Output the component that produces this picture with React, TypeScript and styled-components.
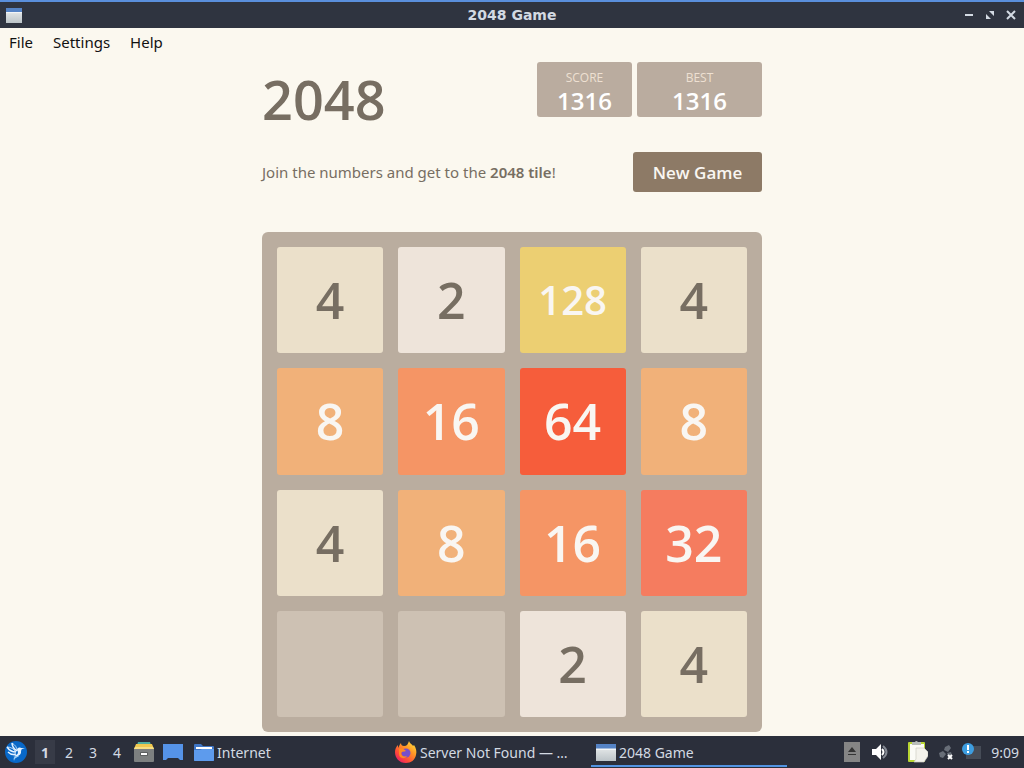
import React from "react";
import styled, { createGlobalStyle } from "styled-components";

const uiFont = `"Noto Sans", "Open Sans", sans-serif`;
const gameFont = `"Open Sans", "Noto Sans", sans-serif`;

const GlobalStyle = createGlobalStyle`
  *, *::before, *::after { box-sizing: border-box; }
  body { margin: 0; background: #fbf8ef; }
  button { font: inherit; border: 0; background: none; padding: 0; color: inherit; cursor: pointer; }
  h1, p { margin: 0; }
`;

const Desktop = styled.div`
  min-height: 100vh;
  display: flex;
  flex-direction: column;
  font-family: ${uiFont};
`;

const TitleBar = styled.header`
  height: 28px;
  border-top: 2px solid #5a8fdc;
  background: #2f3440;
  color: #d3dae3;
  display: grid;
  grid-template-columns: 1fr auto 1fr;
  align-items: center;
  padding: 0 6px;
`;

const WindowTitle = styled.span`
  font: bold 14px/26px "DejaVu Sans", sans-serif;
`;

const WindowButtons = styled.div`
  justify-self: end;
  display: flex;
  gap: 7px;
`;

const WindowButton = styled.button`
  width: 14px;
  height: 14px;
  svg { display: block; }
`;

const MenuBar = styled.nav`
  display: flex;
  gap: 20px;
  height: 28px;
  padding: 0 9px;
  align-items: center;
  font-size: 15px;
  line-height: 20px;
  color: #111;
`;

const Game = styled.main`
  flex: 1;
  width: 100%;
  max-width: 500px;
  margin: 0 auto;
  padding: 6px 0 4px;
  font-family: ${gameFont};
  color: #776e62;
`;

const Heading = styled.div`
  display: flex;
  justify-content: space-between;
  align-items: flex-start;
  height: 90px;
`;

const Logo = styled.h1`
  font-size: 54px;
  font-weight: 650;
  line-height: 74px;
`;

const Scores = styled.div`
  display: flex;
  gap: 5px;
`;

const ScoreBox = styled.div<{ $wide?: boolean }>`
  width: ${(p) => (p.$wide ? 125 : 95)}px;
  height: 55px;
  padding-top: 7px;
  border-radius: 3px;
  background: #baac9f;
  text-align: center;
`;

const ScoreLabel = styled.div`
  font-size: 12px;
  line-height: 18px;
  color: #eee0d2;
`;

const ScoreValue = styled.div`
  font-size: 24px;
  font-weight: 650;
  line-height: 28px;
  color: #fff;
`;

const Intro = styled.div`
  display: flex;
  justify-content: space-between;
  align-items: center;
  height: 40px;
  margin-bottom: 40px;
  p { font: 15px/20px ${uiFont}; }
  strong { font-weight: 600; }
`;

const NewGame = styled.button`
  width: 129px;
  height: 40px;
  border-radius: 3px;
  background: #8d7a66;
  color: #f9f6f2;
  font-size: 17px;
  font-weight: 600;
`;

const Board = styled.section`
  display: grid;
  grid-template-columns: repeat(4, 1fr);
  gap: 15px;
  padding: 15px;
  border-radius: 6px;
  background: #baad9f;
`;

const tileColors: Record<number, string> = {
  0: "#cdc1b3",
  2: "#eee4da",
  4: "#ebe0ca",
  8: "#f1b179",
  16: "#f59565",
  32: "#f57c5f",
  64: "#f65d3b",
  128: "#eccf72",
};

const Tile = styled.div<{ $value: number }>`
  aspect-ratio: 1;
  display: flex;
  align-items: center;
  justify-content: center;
  border-radius: 3px;
  background: ${(p) => tileColors[p.$value]};
  color: ${(p) => (p.$value > 4 ? "#f9f6f2" : "#776e62")};
  font-size: ${(p) => (p.$value > 99 ? 40 : 50)}px;
  font-weight: 650;
  line-height: 1;
`;

const Taskbar = styled.footer`
  height: 32px;
  display: flex;
  align-items: center;
  background: #2b2f3b;
  color: #d3dae3;
  padding: 0 5px 0 4px;
  font-size: 14px;
`;

const Launcher = styled.button`
  width: 24px;
  height: 24px;
  margin-right: 5px;
  svg { display: block; margin: auto; }
`;

const Workspaces = styled.div`
  display: flex;
  margin-right: 3px;
`;

const Workspace = styled.button<{ $active?: boolean }>`
  width: 24px;
  height: 24px;
  border-left: 2px solid transparent;
  border-right: 2px solid transparent;
  background: ${(p) => (p.$active ? "#373b47" : "transparent")} padding-box;
  font-weight: ${(p) => (p.$active ? 700 : 400)};
`;

const Folder = styled.button`
  display: flex;
  align-items: center;
  gap: 3px;
  width: 196px;
  margin-left: 4px;
`;

const Task = styled.button<{ $active?: boolean }>`
  display: flex;
  align-items: center;
  gap: 3px;
  width: ${(p) => (p.$active ? 196 : 201)}px;
  height: 30px;
  padding: 2px 5px 0;
  border-bottom: 2px solid ${(p) => (p.$active ? "#5294e2" : "transparent")};
  white-space: nowrap;
`;

const Tray = styled.div`
  margin-left: auto;
  display: flex;
  align-items: center;
`;

const TrayButton = styled.button<{ $gap: number }>`
  margin-right: ${(p) => p.$gap}px;
  svg { display: block; }
`;

const WindowIcon = ({ size, height }: { size: number; height: number }) => (
  <svg width={size} height={height} viewBox="0 0 20 18" preserveAspectRatio="none" aria-hidden="true">
    <defs>
      <linearGradient id="pane" x2="0" y2="1">
        <stop stopColor="#f0f2f2" />
        <stop offset="1" stopColor="#bcc4c8" />
      </linearGradient>
    </defs>
    <rect width="20" height="18" fill="url(#pane)" />
    <rect width="20" height="5" fill="#5583c5" />
    <path d="M0 5.5h20" stroke="#fff" />
  </svg>
);

const BirdIcon = () => (
  <svg width="22" height="22" viewBox="0 0 22 22" aria-hidden="true">
    <circle cx="11" cy="11" r="11" fill="#0868c8" />
    <path d="M7 2c0 4 2 6 5 8M2 6c2 3 5 5 9 5M3 11c2 2 5 3 8 2" fill="none" stroke="#e4f2ff" strokeWidth="1.5" />
    <path d="M7 2c3 2 5 4 5 8M2 6c4 0 7 2 9 5" fill="none" stroke="#e4f2ff" strokeWidth=".8" />
    <path d="M20 7l-4 0c-2-1-4 0-4 2 2 3 1 5-4 6 3 1 7 0 8-3 0-2 0-3 1-4z" fill="#e4f2ff" />
    <path d="M14 15c-2 2-4 1-5 5-1-3 0-4 2-5" fill="#9fd0f5" />
  </svg>
);

const DrawerIcon = () => (
  <svg width="20" height="22" viewBox="0 0 20 22" aria-hidden="true">
    <path d="M4 1h12l1 3H3z" fill="#4fae9f" />
    <path d="M2 3h16l2 5H0z" fill="#f1c94f" />
    <path d="M1 6h18l1 2H0z" fill="#f7df83" />
    <path d="M0 8h20v12q0 1-1 1H1q-1 0-1-1z" fill="#7d8080" />
    <rect x="6" y="11" width="8" height="4" rx="1" fill="#5d6060" />
    <rect x="7" y="12" width="6" height="2" fill="#fff" />
  </svg>
);

const ScreenIcon = () => (
  <svg width="20" height="18" viewBox="0 0 20 18" aria-hidden="true">
    <path d="M0 1h20v16h-3l-2-2H5l-2 2H0z" fill="#5593e8" />
  </svg>
);

const FolderIcon = () => (
  <svg width="20" height="19" viewBox="0 0 20 19" aria-hidden="true">
    <path d="M0 2q0-1 1-1h6l2 2h10q1 0 1 1v13q0 1-1 1H1q-1 0-1-1z" fill="#3f76c6" />
    <path d="M2 4h16v2H2z" fill="#fff" />
    <path d="M0 7h6l2-1h12v11q0 1-1 1H1q-1 0-1-1z" fill="#5d9bed" />
  </svg>
);

const FirefoxIcon = () => (
  <svg width="22" height="22" viewBox="0 0 22 22" aria-hidden="true">
    <defs>
      <linearGradient id="fox" x1="1" y1="0" x2="0.2" y2="1">
        <stop stopColor="#fff047" />
        <stop offset=".4" stopColor="#ff9a25" />
        <stop offset=".75" stopColor="#ff4b38" />
        <stop offset="1" stopColor="#e7196b" />
      </linearGradient>
    </defs>
    <path d="M14 0c1 3 3 3 4 5l1-1c2 3 3 6 2 10-1 5-5 8-10 8C4 22 0 17 0 11c0-3 1-5 3-7v3c1-1 1-3 3-5 0 2 1 3 3 3 3 0 4-2 5-5z" fill="url(#fox)" />
    <circle cx="11" cy="12" r="4.5" fill="#7850c9" />
    <path d="M4 8c3-1 5 0 7 2-2 1-4 0-5 2 0 3 3 4 6 3-3 4-8 2-8-2z" fill="#ff8a22" />
  </svg>
);

const EjectIcon = () => (
  <svg width="16" height="20" viewBox="0 0 16 20" aria-hidden="true">
    <path d="M0 0h16v20H0z" fill="#858585" />
    <path d="M8 5l4 5H4zM4 12h8v1H4z" fill="#343434" />
  </svg>
);

const SpeakerIcon = () => (
  <svg width="17" height="16" viewBox="0 0 17 16" aria-hidden="true">
    <path d="M0 5h4l5-5v16l-5-5H0z" fill="#fff" />
    <path d="M10 5q3 3 0 6" fill="none" stroke="#fff" strokeWidth="2" />
    <path d="M11 2q7 6 0 12" fill="none" stroke="#858a94" strokeWidth="2" />
  </svg>
);

const ClipboardIcon = () => (
  <svg width="20" height="22" viewBox="0 0 20 22" aria-hidden="true">
    <rect y="1" width="17" height="20" rx="1" fill="#b8d532" />
    <path d="M2 3h14v16H2z" fill="#fbfbf6" />
    <path d="M4 1h3q1-2 3 0h3v3H4z" fill="#b9bdb9" />
    <path d="M8 7h8l4 4v4l-4 6H6l2-3z" fill="#f4f3ec" stroke="#cfcfc4" strokeWidth=".7" />
  </svg>
);

const NetworkIcon = () => (
  <svg width="14" height="16" viewBox="0 0 14 16" aria-hidden="true">
    <path d="M6 3l4-2 2 3-3 4-4-2zM0 9l4-2 3 3-3 4-3-1zM8 9l4-1 1 3-4 1z" fill="#686e78" />
    <path d="M9 11l4 4m0-4l-4 4" stroke="#fff" strokeWidth="2" />
  </svg>
);

const UpdateIcon = () => (
  <svg width="19" height="18" viewBox="0 0 19 18" aria-hidden="true">
    <path d="M4 3h15v13H4z" fill="#464c57" />
    <circle cx="6" cy="6" r="6" fill="#3d9de0" />
    <path d="M5 2h2v5H5zM5 8h2v2H5z" fill="#fff" />
  </svg>
);

const cells = [4, 2, 128, 4, 8, 16, 64, 8, 4, 8, 16, 32, 0, 0, 2, 4];

export default function App() {
  return (
    <Desktop>
      <GlobalStyle />
      <TitleBar>
        <WindowIcon size={16} height={15} />
        <WindowTitle>2048 Game</WindowTitle>
        <WindowButtons>
          <WindowButton aria-label="Minimize">
            <svg width="14" height="14"><path d="M3 7h8" stroke="#d3dae3" strokeWidth="2" /></svg>
          </WindowButton>
          <WindowButton aria-label="Restore">
            <svg width="14" height="14"><path d="M6 3h5v5zM3 6v5h5z" fill="#d3dae3" /></svg>
          </WindowButton>
          <WindowButton aria-label="Close">
            <svg width="14" height="14"><path d="M3 3l8 8m0-8l-8 8" stroke="#d3dae3" strokeWidth="2" /></svg>
          </WindowButton>
        </WindowButtons>
      </TitleBar>
      <MenuBar>
        <button>File</button>
        <button>Settings</button>
        <button>Help</button>
      </MenuBar>
      <Game>
        <Heading>
          <Logo>2048</Logo>
          <Scores>
            <ScoreBox><ScoreLabel>SCORE</ScoreLabel><ScoreValue>1316</ScoreValue></ScoreBox>
            <ScoreBox $wide><ScoreLabel>BEST</ScoreLabel><ScoreValue>1316</ScoreValue></ScoreBox>
          </Scores>
        </Heading>
        <Intro>
          <p>Join the numbers and get to the <strong>2048 tile</strong>!</p>
          <NewGame>New Game</NewGame>
        </Intro>
        <Board>
          {cells.map((value, i) => (
            <Tile key={i} $value={value}>{value || ""}</Tile>
          ))}
        </Board>
      </Game>
      <Taskbar>
        <Launcher aria-label="Applications"><BirdIcon /></Launcher>
        <Workspaces>
          <Workspace $active>1</Workspace>
          <Workspace>2</Workspace>
          <Workspace>3</Workspace>
          <Workspace>4</Workspace>
        </Workspaces>
        <Launcher aria-label="Files"><DrawerIcon /></Launcher>
        <Launcher aria-label="Show desktop"><ScreenIcon /></Launcher>
        <Folder><FolderIcon />Internet</Folder>
        <Task><FirefoxIcon />Server Not Found — …</Task>
        <Task $active><WindowIcon size={20} height={17} />2048 Game</Task>
        <Tray>
          <TrayButton $gap={12} aria-label="Eject"><EjectIcon /></TrayButton>
          <TrayButton $gap={19} aria-label="Volume"><SpeakerIcon /></TrayButton>
          <TrayButton $gap={11} aria-label="Clipboard"><ClipboardIcon /></TrayButton>
          <TrayButton $gap={9} aria-label="Network"><NetworkIcon /></TrayButton>
          <TrayButton $gap={10} aria-label="Updates"><UpdateIcon /></TrayButton>
          <time>9:09</time>
        </Tray>
      </Taskbar>
    </Desktop>
  );
}
